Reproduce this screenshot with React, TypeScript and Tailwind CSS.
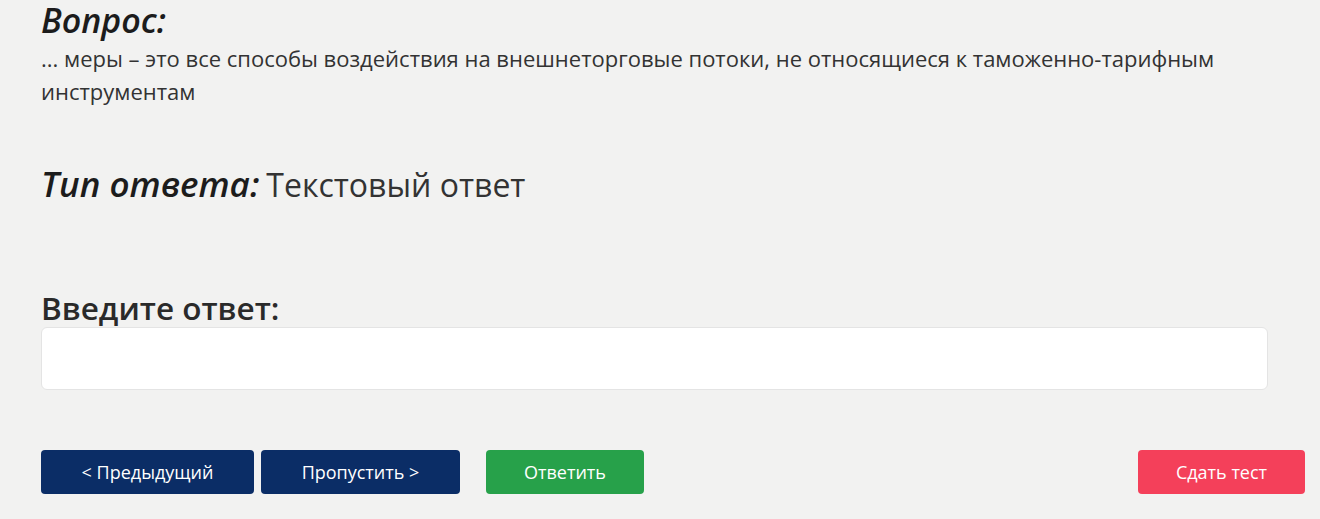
export default function App() {
  return (
    <div
      className="min-h-[519px] w-full bg-[#f2f2f1] text-[#222]"
      style={{ fontFamily: '"Open Sans", "Noto Sans", sans-serif' }}
    >
      <div className="pl-[41px] pr-[52px] pt-[1px]">
        {/* question */}
        <div className="text-[34px] font-semibold italic leading-[39px] text-[#1c1c1c]">Вопрос:</div>
        <p className="mt-[2px] text-[22px] leading-[33px] text-[#333] pr-[22px]">
          ... меры – это все способы воздействия на внешнеторговые потоки, не относящиеся к таможенно-тарифным
          инструментам
        </p>

        {/* answer type */}
        <div className="mt-[56px] flex items-baseline leading-[40px]">
          <span className="mr-[7px] text-[35px] font-semibold italic text-[#1c1c1c]">Тип ответа:</span>
          <span className="text-[32px] text-[#333]">Текстовый ответ</span>
        </div>

        {/* input */}
        <div className="mt-[83px] text-[31.5px] font-semibold leading-[39px] text-[#2a2a2a]">Введите ответ:</div>
        <input
          type="text"
          className="block h-[63px] w-full rounded-[6px] border border-[#e4e4e4] bg-white px-3 text-[20px] outline-none"
        />

        {/* buttons */}
        <div className="mt-[60px] flex items-center">
          <button className="h-[44px] w-[213px] rounded-[4px] bg-[#0b2d66] text-[18px] text-white">
            &lt; Предыдущий
          </button>
          <button className="ml-[7px] h-[44px] w-[199px] rounded-[4px] bg-[#0b2d66] text-[18px] text-white">
            Пропустить &gt;
          </button>
          <button className="ml-[26px] h-[44px] w-[158px] rounded-[4px] bg-[#27a14a] text-[18px] text-white">
            Ответить
          </button>
          <button className="ml-auto mr-[-37px] h-[44px] w-[167px] rounded-[4px] bg-[#f4405a] text-[18px] text-white">
            Сдать тест
          </button>
        </div>
      </div>
    </div>
  );
}
